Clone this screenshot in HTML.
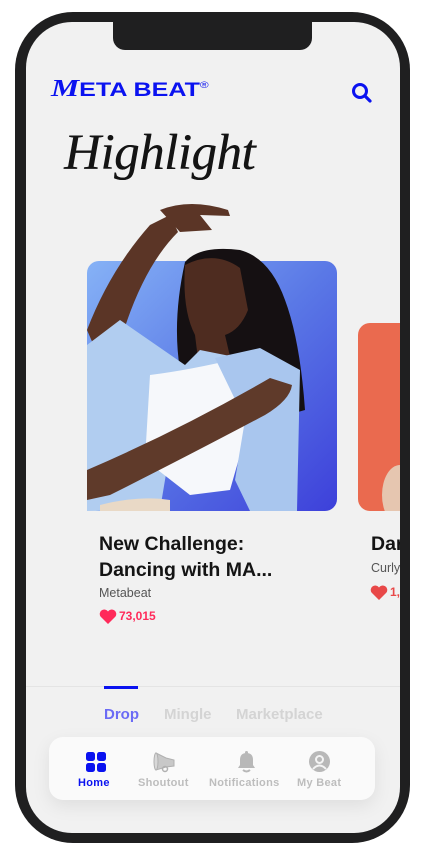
<!DOCTYPE html>
<html><head><meta charset="utf-8"><style>
*{margin:0;padding:0;box-sizing:border-box}
body{width:425px;height:856px;background:#fff;position:relative;overflow:hidden;font-family:"Liberation Sans",sans-serif}
.phone{position:absolute;left:15px;top:12px;width:395px;height:831px;background:#1f1f20;border-radius:58px}
.screen{position:absolute;left:26px;top:22px;width:374px;height:811px;background:#f1f1f1;border-radius:46px;overflow:hidden}
.notch{position:absolute;left:113px;top:22px;width:199px;height:28px;background:#1f1f20;border-radius:0 0 12px 12px}
.abs{position:absolute}
</style></head><body>
<div class="phone"></div>
<div class="screen"></div>
<div class="notch"></div>

<div class="abs" style="left:51px;top:79px;color:#0a12f0;font-weight:900;font-size:19px;font-family:'Liberation Sans',sans-serif;white-space:nowrap;transform:scaleX(1.32);transform-origin:left"><span style="font-family:'Liberation Serif',serif;font-style:italic;font-size:24px;line-height:20px">M</span>ETA BEAT<sup style="font-size:9px;font-weight:400;vertical-align:8px">®</sup></div>
<svg class="abs" style="left:351px;top:82px" width="22" height="22" viewBox="0 0 22 22"><circle cx="9" cy="9" r="6.5" fill="none" stroke="#0a12f0" stroke-width="3"/><path d="M14 14l5 5" stroke="#0a12f0" stroke-width="3.2" stroke-linecap="round"/></svg>

<div class="abs" style="left:64px;top:124px;font-family:'Liberation Serif',serif;font-style:italic;font-size:51px;color:#141414;letter-spacing:-0.5px;text-shadow:0.4px 0 0 #141414">Highlight</div>

<svg class="abs" style="left:0;top:0" width="400" height="600">
<defs>
<linearGradient id="g" x1="0" y1="0" x2="1" y2="1"><stop offset="0" stop-color="#86b2f6"/><stop offset="0.5" stop-color="#5a78e6"/><stop offset="1" stop-color="#3d40da"/></linearGradient>
<clipPath id="c"><rect x="87" y="190" width="250" height="321"/></clipPath>
<clipPath id="c2"><rect x="358" y="323" width="60" height="188" rx="12"/></clipPath>
</defs>
<rect x="87" y="261" width="250" height="250" rx="12" fill="url(#g)"/>
<g clip-path="url(#c2)"><rect x="358" y="323" width="60" height="188" fill="#ea6a4f"/>
<ellipse cx="400" cy="495" rx="18" ry="30" fill="#e6c6b0"/></g>
<g clip-path="url(#c)">
<path d="M185 262 Q200 245 240 250 Q270 258 285 300 Q300 340 305 410 L270 420 L230 380 L180 370 Q172 320 185 262Z" fill="#151012"/>
<path d="M87 330 Q110 270 150 225 L170 215 L178 232 Q140 270 118 350 L100 360Z" fill="#5b3526"/>
<path d="M160 210 Q190 198 228 210 L230 216 L200 215 L212 230 L180 232 Z" fill="#5b3526"/>
<path d="M185 265 Q215 250 240 268 L248 310 Q240 330 225 335 L232 365 L200 375 L195 335 Q182 310 185 265Z" fill="#4e2c20"/>
<path d="M87 345 L120 320 L185 365 L200 350 L240 358 L175 420 L160 510 L87 511Z" fill="#b1cdf0"/>
<path d="M150 375 Q190 370 240 358 L250 420 L230 490 L190 495 L145 460Z" fill="#f6f8fb"/>
<path d="M215 358 L260 348 L300 370 L297 511 L250 511 L235 480 L245 420Z" fill="#a9c6ee"/>
<path d="M87 470 Q180 430 270 378 L292 385 Q290 400 265 415 Q180 460 110 495 L87 500Z" fill="#5f3a2a"/>
<path d="M100 505 Q140 495 170 500 L170 511 L100 511Z" fill="#e9d9c6"/>
</g>
</svg>

<div class="abs" style="left:99px;top:531px;font-size:19.5px;font-weight:700;color:#141414;line-height:26px;font-family:'Liberation Sans',sans-serif">New Challenge:<br>Dancing with MA...</div>
<div class="abs" style="left:99px;top:586px;font-size:12.5px;color:#555">Metabeat</div>
<svg class="abs" style="left:99px;top:609px" width="18" height="15" viewBox="0 0 18 15"><path d="M9 15 L1.5 7.5 A4.3 4.3 0 0 1 9 2.5 A4.3 4.3 0 0 1 16.5 7.5Z" fill="#ff2a5a"/></svg>
<div class="abs" style="left:119px;top:609px;font-size:12px;font-weight:700;color:#ff2a5a">73,015</div>

<div style="position:absolute;left:0;top:520px;width:400px;height:100px;overflow:hidden">
<div class="abs" style="left:371px;top:11px;font-size:19.5px;font-weight:700;color:#141414;line-height:26px">Dar</div>
<div class="abs" style="left:371px;top:41px;font-size:12.5px;color:#555">Curly</div>
<svg class="abs" style="left:370px;top:65px" width="18" height="15" viewBox="0 0 18 15"><path d="M9 15 L1.5 7.5 A4.3 4.3 0 0 1 9 2.5 A4.3 4.3 0 0 1 16.5 7.5Z" fill="#e84848"/></svg>
<div class="abs" style="left:390px;top:65px;font-size:12px;font-weight:700;color:#e84848">1,</div>
</div>

<div class="abs" style="left:26px;top:686px;width:374px;height:1px;background:#e4e4e4"></div>
<div class="abs" style="left:104px;top:686px;width:34px;height:3px;background:#0a12f0"></div>
<div class="abs" style="left:104px;top:706px;font-size:15px;font-weight:700;color:#6b6bf5">Drop</div>
<div class="abs" style="left:164px;top:706px;font-size:15px;font-weight:700;color:#d4d4d4">Mingle</div>
<div class="abs" style="left:236px;top:706px;font-size:15px;font-weight:700;color:#d4d4d4">Marketplace</div>

<div class="abs" style="left:49px;top:737px;width:326px;height:63px;background:#fafafa;border-radius:14px;box-shadow:0 6px 18px rgba(0,0,0,0.08)"></div>
<svg class="abs" style="left:86px;top:752px" width="20" height="20"><rect x="0" y="0" width="9" height="9" rx="2.5" fill="#0a12f0"/><rect x="11" y="0" width="9" height="9" rx="2.5" fill="#0a12f0"/><rect x="0" y="11" width="9" height="9" rx="2.5" fill="#0a12f0"/><rect x="11" y="11" width="9" height="9" rx="2.5" fill="#0a12f0"/></svg>
<svg class="abs" style="left:152px;top:751px" width="24" height="22" viewBox="0 0 24 22"><path d="M4 2 L14 7 L22 9 L22 15 L14 16 L4 19Z" fill="#c8c8c8" stroke="#b0b0b0" stroke-width="1"/><ellipse cx="4" cy="10.5" rx="2" ry="8.5" fill="#d8d8d8" stroke="#b0b0b0"/><circle cx="13" cy="18" r="2.5" fill="none" stroke="#b0b0b0" stroke-width="1.5"/></svg>
<svg class="abs" style="left:237px;top:751px" width="19" height="22" viewBox="0 0 19 22"><path d="M9.5 2 Q3 2 3 9 L3 14 L1 17 L18 17 L16 14 L16 9 Q16 2 9.5 2Z" fill="#b8b8b8"/><rect x="8" y="0" width="3" height="3" rx="1.5" fill="#b8b8b8"/><path d="M6 19 Q9.5 22 13 19" stroke="#b8b8b8" stroke-width="2" fill="none"/></svg>
<svg class="abs" style="left:309px;top:751px" width="21" height="21" viewBox="0 0 21 21"><circle cx="10.5" cy="10.5" r="10.5" fill="#b8b8b8"/><circle cx="10.5" cy="8.5" r="3.5" fill="none" stroke="#f4f4f4" stroke-width="2"/><path d="M4 18 Q10.5 11 17 18" fill="none" stroke="#f4f4f4" stroke-width="2"/></svg>
<div class="abs" style="left:78px;top:777px;font-size:11px;font-weight:700;color:#0a12f0;letter-spacing:0.3px">Home</div>
<div class="abs" style="left:138px;top:777px;font-size:11px;font-weight:700;color:#bdbdbd;letter-spacing:0.3px">Shoutout</div>
<div class="abs" style="left:209px;top:777px;font-size:11px;font-weight:700;color:#bdbdbd;letter-spacing:0.3px">Notifications</div>
<div class="abs" style="left:297px;top:777px;font-size:11px;font-weight:700;color:#bdbdbd;letter-spacing:0.3px">My Beat</div>
</body></html>
